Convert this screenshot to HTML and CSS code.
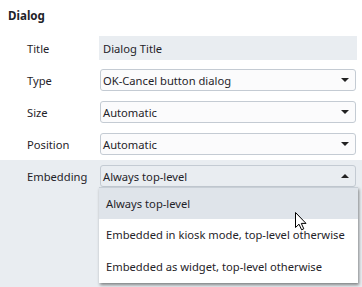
FILE: index.html
```html
<!DOCTYPE html>
<html lang="en">
<head>
    <meta charset="UTF-8">
    <title>Dialog properties</title>
    <link rel="stylesheet" href="styles.css">
</head>
<body>
    <div class="panel">
        <div class="section-title">Dialog</div>

        <div class="row">
            <div class="label">Title</div>
            <div class="field text-field">Dialog Title</div>
        </div>

        <div class="row">
            <div class="label">Type</div>
            <div class="field select">
                <span>OK-Cancel button dialog</span>
                <span class="caret down"></span>
            </div>
        </div>

        <div class="row">
            <div class="label">Size</div>
            <div class="field select">
                <span>Automatic</span>
                <span class="caret down"></span>
            </div>
        </div>

        <div class="row">
            <div class="label">Position</div>
            <div class="field select">
                <span>Automatic</span>
                <span class="caret down"></span>
            </div>
        </div>

        <!-- active row, dropdown open -->
        <div class="row active">
            <div class="label">Embedding</div>
            <div class="field select open">
                <span>Always top-level</span>
                <span class="caret up"></span>
            </div>
            <ul class="dropdown">
                <li class="hover">Always top-level</li>
                <li>Embedded in kiosk mode, top-level otherwise</li>
                <li>Embedded as widget, top-level otherwise</li>
            </ul>
            <svg class="cursor" width="13" height="19" viewBox="0 0 13 19">
                <path d="M0.5 0.5 L0.5 15.5 L4 12.2 L6.6 17.8 L8.8 16.8 L6.3 11.4 L11 11.4 Z" fill="#fff" stroke="#000" stroke-width="1" stroke-linejoin="round"/>
            </svg>
        </div>
        <div class="filler"></div>
    </div>
</body>
</html>
```
FILE: styles.css
```css
body {
    margin: 0;
    background-color: #ffffff;
    font-family: "Noto Sans", "Open Sans", sans-serif;
    font-size: 11.2px;
    color: #1f2329;
}

.panel {
    width: 362px;
    height: 287px;
    display: flex;
    flex-direction: column;
    overflow: hidden;
}

/* Section heading */
.section-title {
    height: 32px;
    line-height: 32px;
    padding-left: 8px;
    font-weight: bold;
    font-size: 11.6px;
}

/* Property rows */
.row {
    position: relative;
    display: flex;
    align-items: center;
    height: 32px;
    padding: 0 5px 0 27px;
}

.row.active {
    background-color: #e9edf1;
}

.label {
    width: 72px;
    flex-shrink: 0;
}

.field {
    flex: 1;
    display: flex;
    align-items: center;
    white-space: nowrap;
}

.text-field {
    height: 24px;
    padding-left: 4px;
    background-color: #e9edf1;
}

.select {
    height: 20px;
    margin: 0 1px;
    padding: 0 6px 0 2px;
    border: 1px solid #c4cbd3;
    border-radius: 3px;
    background-color: #fbfbfc;
    justify-content: space-between;
}

.select.open {
    background-color: #e9edf1;
}

.caret {
    width: 0;
    height: 0;
    border-left: 4px solid transparent;
    border-right: 4px solid transparent;
}

.caret.down {
    border-top: 4px solid #222;
}

.caret.up {
    border-bottom: 4px solid #222;
}

.filler {
    flex: 1;
    background-color: #e9edf1;
}

/* Open dropdown list */
.dropdown {
    position: absolute;
    left: 99px;
    top: 27px;
    width: 259px;
    margin: 0;
    padding: 0;
    list-style: none;
    background-color: #ffffff;
    box-shadow: 1px 2px 3px rgba(0, 0, 0, 0.45);
    z-index: 2;
}

.dropdown li {
    height: 32px;
    line-height: 32px;
    padding-left: 7px;
    white-space: nowrap;
}

.dropdown li.hover {
    background-color: #dfe4ea;
    border-top: 1px solid #c8cfd6;
    height: 31px;
    line-height: 31px;
}

.cursor {
    position: absolute;
    left: 295px;
    top: 52px;
    z-index: 3;
}
```
